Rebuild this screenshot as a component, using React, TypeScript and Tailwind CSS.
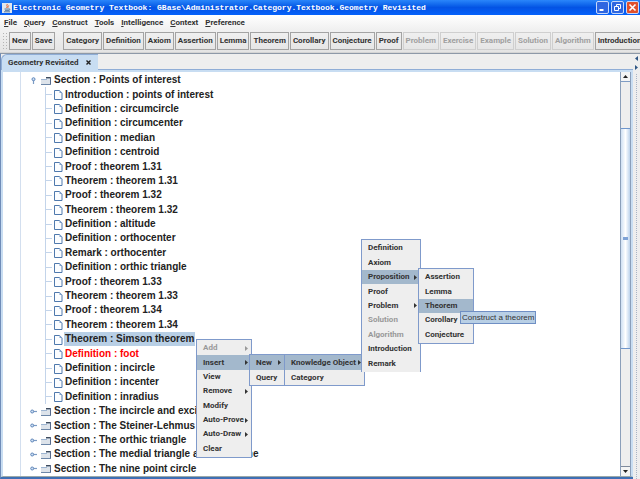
import { type ReactNode } from "react";
import clsx from "clsx";

interface MenuEntry {
  label: string;
  submenu?: boolean;
  active?: boolean;
  disabled?: boolean;
}

interface ToolEntry {
  label: string;
  disabled?: boolean;
}

const MENU_BAR = [
  "File",
  "Query",
  "Construct",
  "Tools",
  "Intelligence",
  "Context",
  "Preference",
];

const TOOLS: ToolEntry[] = [
  { label: "Category" },
  { label: "Definition" },
  { label: "Axiom" },
  { label: "Assertion" },
  { label: "Lemma" },
  { label: "Theorem" },
  { label: "Corollary" },
  { label: "Conjecture" },
  { label: "Proof" },
  { label: "Problem", disabled: true },
  { label: "Exercise", disabled: true },
  { label: "Example", disabled: true },
  { label: "Solution", disabled: true },
  { label: "Algorithm", disabled: true },
  { label: "Introduction" },
];

const ITEMS = [
  "Introduction : points of interest",
  "Definition : circumcircle",
  "Definition : circumcenter",
  "Definition : median",
  "Definition : centroid",
  "Proof : theorem 1.31",
  "Theorem : theorem 1.31",
  "Proof : theorem 1.32",
  "Theorem : theorem 1.32",
  "Definition : altitude",
  "Definition : orthocenter",
  "Remark : orthocenter",
  "Definition : orthic triangle",
  "Proof : theorem 1.33",
  "Theorem : theorem 1.33",
  "Proof : theorem 1.34",
  "Theorem : theorem 1.34",
  "Theorem : Simson theorem",
  "Definition : foot",
  "Definition : incircle",
  "Definition : incenter",
  "Definition : inradius",
];

const SELECTED_ITEM = "Theorem : Simson theorem";
const INCOMPLETE_ITEM = "Definition : foot";

const SECTIONS = [
  "Section : The incircle and excircles",
  "Section : The Steiner-Lehmus theorem",
  "Section : The orthic triangle",
  "Section : The medial triangle and Euler line",
  "Section : The nine point circle",
];

const CONTEXT_MENU: MenuEntry[] = [
  { label: "Add", submenu: true, disabled: true },
  { label: "Insert", submenu: true, active: true },
  { label: "View" },
  { label: "Remove", submenu: true },
  { label: "Modify" },
  { label: "Auto-Prove", submenu: true },
  { label: "Auto-Draw", submenu: true },
  { label: "Clear" },
];

const INSERT_MENU: MenuEntry[] = [
  { label: "New", submenu: true, active: true },
  { label: "Query" },
];

const NEW_MENU: MenuEntry[] = [
  { label: "Knowledge Object", submenu: true, active: true },
  { label: "Category" },
];

const OBJECT_MENU: MenuEntry[] = [
  { label: "Definition" },
  { label: "Axiom" },
  { label: "Proposition", submenu: true, active: true },
  { label: "Proof" },
  { label: "Problem", submenu: true },
  { label: "Solution", disabled: true },
  { label: "Algorithm", disabled: true },
  { label: "Introduction" },
  { label: "Remark" },
];

const PROPOSITION_MENU: MenuEntry[] = [
  { label: "Assertion" },
  { label: "Lemma" },
  { label: "Theorem", active: true },
  { label: "Corollary" },
  { label: "Conjecture" },
];

function JavaIcon() {
  return (
    <svg width="10" height="10" viewBox="0 0 10 10" aria-hidden="true">
      <rect width="10" height="10" fill="#dfe6ee" />
      <path
        d="M5.5 1C3.5 2.6 6.4 3 4.6 5M6.8 2.4C5.6 3.2 6.6 3.8 5.8 4.8"
        stroke="#e0602a"
        fill="none"
      />
      <path
        d="M2.5 6h4.5M3 7.4h4M2 8.8h6M7 6c1.4-.2 1.2 1.2 0 1.4"
        stroke="#4c6f96"
        strokeWidth=".9"
        fill="none"
      />
    </svg>
  );
}

function FileIcon() {
  return (
    <svg
      width="9"
      height="11"
      viewBox="0 0 9 11"
      className="shrink-0"
      aria-hidden="true"
    >
      <path d="M.5 1.5h5l2.500 2.500v6.500H.5z" fill="#fbfdff" stroke="#4f79ad" />
      <path d="M5.500 1v3h3z" fill="#7fa0cb" />
    </svg>
  );
}

function FolderIcon() {
  return (
    <svg
      width="10"
      height="9"
      viewBox="0 0 10 9"
      className="shrink-0"
      aria-hidden="true"
    >
      <path d="M0 3h9v5H0z" fill="#dde3ea" />
      <path d="M5 1.5h4" stroke="#3f4c5e" />
      <path d="M5 2.5h4" stroke="#9aa8b8" />
      <path d="M0 3.5h6" stroke="#9fb6d2" />
      <path d="M9.5 1v7" stroke="#56698a" />
      <path d="M0 8.5h10" stroke="#6d87a8" />
    </svg>
  );
}

function Handle({ open = false }: { open?: boolean }) {
  return (
    <svg
      width="7"
      height="7"
      viewBox="0 0 7 7"
      className={clsx("shrink-0", open && "rotate-90")}
      aria-hidden="true"
    >
      <path d="M3 3.5h4" stroke="#7d9cc4" strokeWidth="1.2" />
      <circle cx="2.2" cy="3.5" r="1.5" fill="#cfe0f3" stroke="#5f86ba" />
    </svg>
  );
}

function TitleBar() {
  const BUTTON =
    "flex h-[13px] w-[13px] items-center justify-center rounded-xs border border-[#c6d8fb]";

  return (
    <header className="flex h-[15px] shrink-0 items-center bg-linear-to-b from-[#2a86fa] via-[#0453e4] to-[#0562fb] pr-px pl-0.5">
      <JavaIcon />
      <h1 className="ml-px flex-1 overflow-hidden font-['Liberation_Mono',monospace] text-[8px] leading-3 font-bold whitespace-nowrap text-white">
        Electronic Geometry Textbook:
        GBase\Administrator.Category.Textbook.Geometry Revisited
      </h1>
      <div className="flex gap-0.5">
        <button aria-label="Minimize" className={clsx(BUTTON, "bg-[#2f66e0]")}>
          <svg width="9" height="9" viewBox="0 0 9 9">
            <path d="M1.5 7h4" stroke="#fff" strokeWidth="2" />
          </svg>
        </button>
        <button aria-label="Restore" className={clsx(BUTTON, "bg-[#2f66e0]")}>
          <svg width="9" height="9" viewBox="0 0 9 9" fill="none" stroke="#fff">
            <path d="M3.500 3V1.500h4v4H6M1.500 3.500h4v4h-4z" />
          </svg>
        </button>
        <button aria-label="Close" className={clsx(BUTTON, "bg-[#e0502c]")}>
          <svg width="9" height="9" viewBox="0 0 9 9">
            <path
              d="M1.5 1.5l6 6M7.5 1.5l-6 6"
              stroke="#fff"
              strokeWidth="1.6"
            />
          </svg>
        </button>
      </div>
    </header>
  );
}

function ToolButton({ label, disabled }: ToolEntry) {
  return (
    <button
      disabled={disabled}
      className={clsx(
        "h-[18px] border px-0.5 whitespace-nowrap",
        disabled
          ? "border-[#cfcfcf] text-[#a0a0a0]"
          : "border-[#a3a3a3] text-[#333]",
      )}
    >
      {label}
    </button>
  );
}

function ToolBar() {
  return (
    <div
      role="toolbar"
      className="flex h-[23px] shrink-0 items-center gap-px overflow-hidden border-b border-[#d4d4d4] bg-linear-to-b from-[#f1f1f1] to-[#e4e4e4] pl-0.5"
    >
      <div className="h-[18px] w-[6px] shrink-0 bg-[radial-gradient(#b4b4b4_1px,transparent_1px)] bg-size-[3px_3px]" />
      <ToolButton label="New" />
      <ToolButton label="Save" />
      <div className="w-[6px] shrink-0" />
      {TOOLS.map((tool) => (
        <ToolButton key={tool.label} {...tool} />
      ))}
    </div>
  );
}

function SectionRow({ label, open }: { label: string; open?: boolean }) {
  return (
    <li className="flex min-h-0 flex-1 items-center pl-[9px]">
      <Handle open={open} />
      <span className="w-1 shrink-0" />
      <FolderIcon />
      <button className="ml-[3px]">{label}</button>
    </li>
  );
}

function ItemRow({ label }: { label: string }) {
  return (
    <li className="flex min-h-0 flex-1 items-center">
      <span className="mr-0.5 h-px w-[6px] bg-[#c3d4ea]" />
      <FileIcon />
      <button
        className={clsx(
          "ml-px h-full px-px",
          label === SELECTED_ITEM && "bg-[#b8cfe5]",
          label === INCOMPLETE_ITEM && "text-[#f00]",
        )}
      >
        {label}
      </button>
    </li>
  );
}

function Tree() {
  return (
    <div className="flex min-w-0 flex-1 overflow-hidden bg-white pl-[17px]">
      <ul className="flex flex-1 flex-col border-l border-[#d3dfef] pt-px font-['Liberation_Sans',Arial,sans-serif] text-[10px] leading-3 font-bold whitespace-nowrap text-[#222]">
        <SectionRow label="Section : Points of interest" open />
        <li className="flex flex-[22] flex-col pl-6">
          <ul className="flex flex-1 flex-col border-l border-[#c3d4ea]">
            {ITEMS.map((item) => (
              <ItemRow key={item} label={item} />
            ))}
          </ul>
        </li>
        {SECTIONS.map((section) => (
          <SectionRow key={section} label={section} />
        ))}
      </ul>
    </div>
  );
}

function ScrollBar() {
  return (
    <div className="flex w-[11px] shrink-0 flex-col border-x border-[#8b9fba] bg-[#eee]">
      <button
        aria-label="Scroll up"
        className="flex h-[10px] items-center justify-center border-b border-[#7f9cc4] bg-[#f4f4f4]"
      >
        <svg width="5" height="3" viewBox="0 0 5 3">
          <path d="M0 3L2.5 0L5 3z" fill="#222" />
        </svg>
      </button>
      <div className="flex-[46]" />
      <div className="flex flex-[220] items-center justify-center border-y border-[#6f96cc] bg-linear-to-r from-[#cfe0f3] via-white to-[#bdd3ec]">
        <span className="h-[3px] w-[5px] bg-[#7fa3d6]" />
      </div>
      <div className="flex-[117]" />
      <button
        aria-label="Scroll down"
        className="flex h-[10px] items-center justify-center border-t border-[#7f8a9c] bg-[#f4f4f4]"
      >
        <svg width="5" height="3" viewBox="0 0 5 3">
          <path d="M0 0L2.5 3L5 0z" fill="#222" />
        </svg>
      </button>
    </div>
  );
}

/**
 * Popup menu, rows share its height evenly
 */
function PopupMenu(props: {
  label: string;
  entries: MenuEntry[];
  className: string;
}) {
  return (
    <div
      role="menu"
      aria-label={props.label}
      className={clsx(
        "absolute flex flex-col border border-[#7f9acb] bg-[#eee]",
        props.className,
      )}
    >
      {props.entries.map((entry) => (
        <button
          key={entry.label}
          role="menuitem"
          disabled={entry.disabled}
          className={clsx(
            "flex min-h-0 flex-1 items-center justify-between pr-[3px] pl-[6px] text-left whitespace-nowrap",
            entry.active && "bg-[#a3b8cc]",
            entry.disabled ? "text-[#999]" : "text-[#333]",
          )}
        >
          {entry.label}
          {entry.submenu && (
            <svg width="3" height="5" viewBox="0 0 3 5" className="shrink-0">
              <path d="M0 0L3 2.5L0 5z" fill="currentColor" />
            </svg>
          )}
        </button>
      ))}
    </div>
  );
}

function Tooltip({ children }: { children: ReactNode }) {
  return (
    <div
      role="tooltip"
      className="absolute top-[311px] left-[460px] border border-[#6f8fc4] bg-[#b8cfe5] px-px font-['Liberation_Sans',Arial,sans-serif] text-[8px] leading-[11px] font-normal whitespace-nowrap text-[#333]"
    >
      {children}
    </div>
  );
}

export default function App() {
  return (
    <div className="relative flex h-screen flex-col overflow-hidden bg-[#eee] font-[Roboto,sans-serif] text-[8px] leading-3 font-bold text-[#333]">
      <TitleBar />
      <nav className="flex h-[15px] shrink-0 items-center gap-[7px] bg-linear-to-b from-white to-[#f0f0f0] pl-1">
        {MENU_BAR.map((label) => (
          <button key={label}>
            <span className="underline">{label[0]}</span>
            {label.slice(1)}
          </button>
        ))}
      </nav>
      <ToolBar />

      <div className="flex min-h-0 flex-1">
        <main className="flex min-w-0 flex-1 flex-col border-t border-b-2 border-l border-t-[#8d99a8] border-b-[#3f6fb4] border-l-[#6f8cb8]">
          <div className="flex h-4 shrink-0">
            <div className="flex items-center gap-[7px] rounded-tl-md border-t border-l border-[#8fadd6] bg-[#c8ddf2] pr-[7px] pl-[6px]">
              <button>Geometry Revisited</button>
              <button aria-label="Close tab">
                <svg width="5" height="5" viewBox="0 0 5 5">
                  <path
                    d="M.5.5l4 4M4.5.5l-4 4"
                    stroke="#222"
                    strokeWidth="1.4"
                  />
                </svg>
              </button>
            </div>
            <div className="flex-1 border-b border-[#8fadd6]" />
          </div>
          <div className="flex min-h-0 flex-1 border-t-2 border-r-2 border-b border-l-2 border-[#c8ddf2] border-b-[#9aa9a9]">
            <Tree />
            <ScrollBar />
          </div>
        </main>
        <aside className="flex w-[7px] shrink-0 flex-col items-center gap-1 border-t border-[#8d99a8] pt-0.5">
          <button aria-label="Collapse left">
            <svg width="3" height="5" viewBox="0 0 3 5" className="block">
              <path d="M3 0L0 2.5L3 5z" fill="#2f5684" />
            </svg>
          </button>
          <button aria-label="Collapse right">
            <svg width="3" height="5" viewBox="0 0 3 5" className="block">
              <path d="M0 0L3 2.5L0 5z" fill="#2f5684" />
            </svg>
          </button>
          <div className="flex-1 border-l border-dotted border-[#a9b4c6]" />
        </aside>
      </div>

      <PopupMenu
        label="Context menu"
        entries={CONTEXT_MENU}
        className="top-[339px] left-[196px] h-[119px] w-[56px] py-px"
      />
      <PopupMenu
        label="Insert"
        entries={INSERT_MENU}
        className="top-[354px] left-[249px] h-[32px] w-[36px]"
      />
      <PopupMenu
        label="New"
        entries={NEW_MENU}
        className="top-[354px] left-[284px] h-[32px] w-[81px]"
      />
      <PopupMenu
        label="Knowledge Object"
        entries={OBJECT_MENU}
        className="top-[239px] left-[361px] h-[133px] w-[60px] border-b-0 py-px"
      />
      <PopupMenu
        label="Proposition"
        entries={PROPOSITION_MENU}
        className="top-[268px] left-[418px] h-[76px] w-[56px] py-px"
      />
      <Tooltip>Construct a theorem</Tooltip>
    </div>
  );
}
